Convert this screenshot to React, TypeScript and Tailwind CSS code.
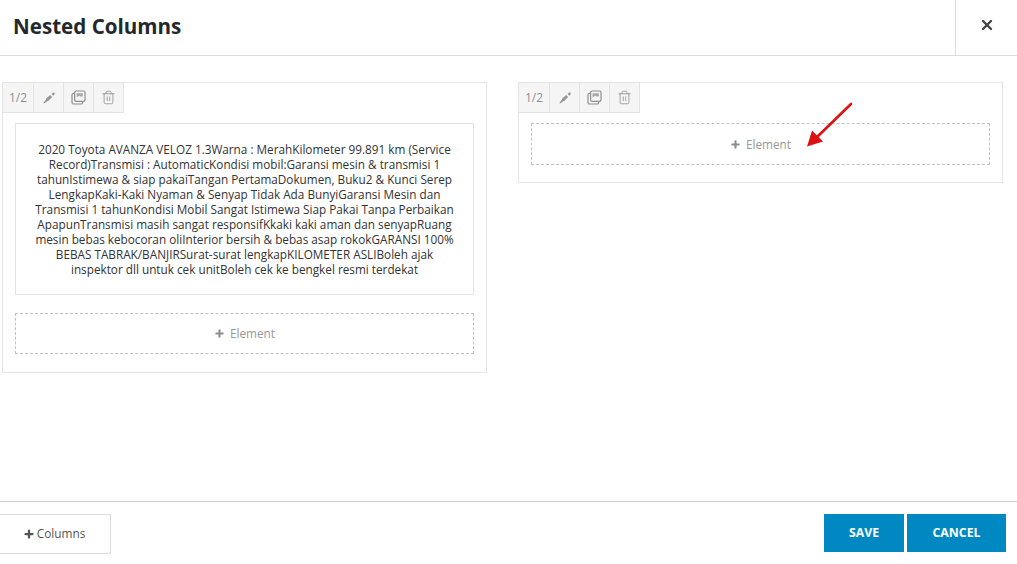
import { Plus, Trash2, X } from "lucide-react";

function PenIcon() {
    return (
        <svg width="14" height="14" viewBox="0 0 14 14" fill="#969696">
            <path d="M9.6 3l1-1c.6-.6 1.3-.6 1.8-.1.5.5.5 1.2-.1 1.8l-1 1-1.7-1.7z" />
            <path d="M8.2 4l2 2-4 4-2.4.2.2-2.4z" />
            <path d="M3.4 9l1.8 1.7-1.7.8-1.5 1-.6-.6 1-1.5z" />
        </svg>
    );
}

function CopyIcon() {
    return (
        <svg width="15" height="15" viewBox="0 0 15 15" fill="none" stroke="#8f8f8f" strokeWidth="1.2">
            <rect x="3.6" y="1" width="10.4" height="10.4" rx="1.6" />
            <path d="M3.6 3.4H2.6C1.6 3.4 1 4 1 5v7.4C1 13.4 1.6 14 2.6 14H10c1 0 1.6-.6 1.6-1.6v-1" />
            <path d="M5.6 3.2h6.2v3.2H9.2L8.4 5.4 5.6 7.6z" fill="#a8a8a8" stroke="none" />
        </svg>
    );
}

function Toolbar() {
    return (
        <div className="flex h-[30px] w-fit bg-[#f5f5f5] text-[#909090]">
            <div className="flex w-[31px] items-center justify-center border-r border-b border-[#e3e3e3] text-[12px]">1/2</div>
            <div className="flex w-[30px] items-center justify-center border-r border-b border-[#e3e3e3]"><PenIcon /></div>
            <div className="flex w-[30px] items-center justify-center border-r border-b border-[#e3e3e3]"><CopyIcon /></div>
            <div className="flex w-[30px] items-center justify-center border-r border-b border-[#e3e3e3]"><Trash2 size={15} strokeWidth={1.3} /></div>
        </div>
    );
}

function AddElement({ tall }: { tall?: boolean }) {
    return (
        <div className={`flex items-center justify-center gap-[5px] border border-dashed border-[#c0c0c0] text-[11.8px] text-[#999] ${tall ? "h-[42px] pt-px" : "h-[41px]"}`}>
            <Plus size={11} strokeWidth={4.5} className="text-[#8c8c8c]" />
            <span>Element</span>
        </div>
    );
}

export default function App() {
    return (
        <div className="relative flex h-[564px] w-[1017px] flex-col overflow-hidden bg-white font-['Open_Sans',sans-serif] text-[#444]">
            <header className="flex h-[56px] items-stretch justify-between border-b border-[#ddd]">
                <h1 className="pl-[13px] pt-[12px] text-[20.6px] leading-[28px] font-bold text-[#23282d]">Nested Columns</h1>
                <div className="flex w-[62px] items-center justify-center border-l border-[#ddd] pb-[6px]">
                    <X size={16} strokeWidth={3.6} className="text-[#444]" />
                </div>
            </header>

            <main className="flex flex-1 items-start gap-[31px] pl-[2px] pt-[26px]">
                <section className="w-[485px] border border-[#e5e5e5]">
                    <Toolbar />
                    <div className="flex flex-col gap-[18px] px-[12px] pt-[10px] pb-[18px]">
                        <div className="border border-[#e3e3e3] px-[16px] pt-[18px] pb-[17px] text-center text-[11.75px] leading-[15px] text-[#333]">
                            2020 Toyota AVANZA VELOZ 1.3Warna : MerahKilometer 99.891 km (Service Record)Transmisi : AutomaticKondisi mobil:Garansi mesin &amp; transmisi 1 tahunIstimewa &amp; siap pakaiTangan PertamaDokumen, Buku2 &amp; Kunci Serep LengkapKaki-Kaki Nyaman &amp; Senyap Tidak Ada BunyiGaransi Mesin dan Transmisi 1 tahunKondisi Mobil Sangat Istimewa Siap Pakai Tanpa Perbaikan ApapunTransmisi masih sangat responsifKkaki kaki aman dan senyapRuang mesin bebas kebocoran oliInterior bersih &amp; bebas asap rokokGARANSI 100% BEBAS TABRAK/BANJIRSurat-surat lengkapKILOMETER ASLIBoleh ajak inspektor dll untuk cek unitBoleh cek ke bengkel resmi terdekat
                        </div>
                        <AddElement />
                    </div>
                </section>

                <section className="w-[485px] border border-[#e5e5e5]">
                    <Toolbar />
                    <div className="px-[12px] pt-[10px] pb-[17px]">
                        <AddElement tall />
                    </div>
                </section>
            </main>

            <footer className="flex h-[63px] items-start justify-between border-t border-[#ccc] pt-[12px] pr-[11px]">
                <button className="-ml-px flex h-[40px] w-[112px] items-center justify-center gap-[2px] border border-[#ddd] pr-[2px] text-[11.8px] text-[#555]">
                    <Plus size={12} strokeWidth={4.5} className="text-[#555]" />
                    <span>Columns</span>
                </button>
                <div className="flex gap-[3px]">
                    <button className="h-[38px] w-[80px] bg-[#0088c2] text-[12.3px] font-bold text-white">SAVE</button>
                    <button className="h-[38px] w-[99px] bg-[#0088c2] text-[12.3px] font-bold text-white">CANCEL</button>
                </div>
            </footer>

            <svg className="absolute left-[800px] top-[98px]" width="58" height="54" viewBox="0 0 58 54">
                <path d="M51 6L15 41" stroke="#dd1111" strokeWidth="2.6" strokeLinecap="round" />
                <path d="M7 48.500l5-16 11 11z" fill="#dd1111" />
            </svg>
        </div>
    );
}
